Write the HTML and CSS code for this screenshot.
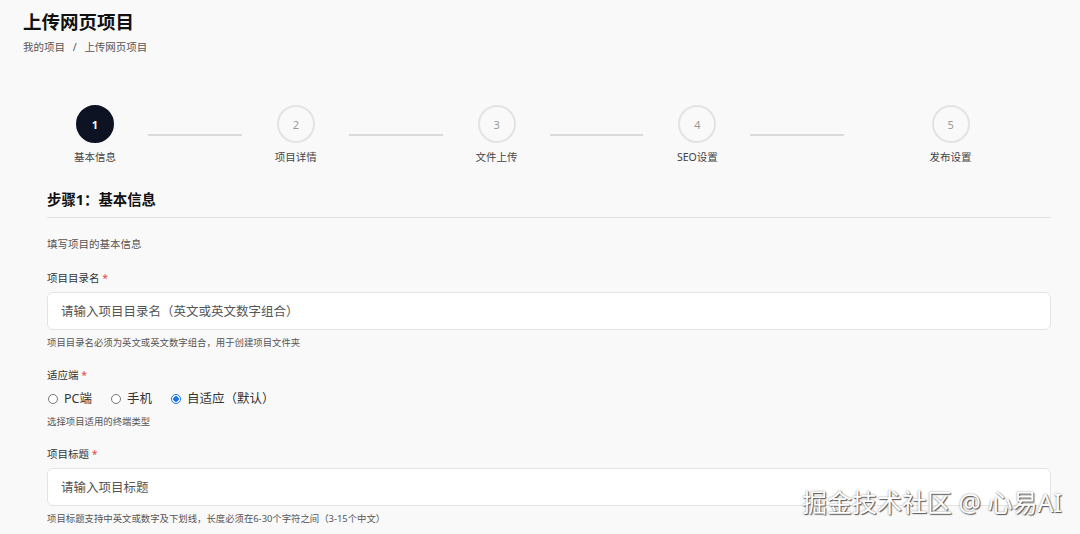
FILE: index.html
```html
<!DOCTYPE html>
<html lang="zh-CN">
<head>
    <meta charset="UTF-8">
    <meta name="viewport" content="width=device-width, initial-scale=1.0">
    <title>上传网页项目</title>
    <link rel="stylesheet" href="styles.css">
</head>
<body>
    <div class="page">
        <div class="page-header">
            <h1 class="page-title">上传网页项目</h1>
            <div class="breadcrumb">
                <span>我的项目</span>
                <span class="sep">/</span>
                <span>上传网页项目</span>
            </div>
        </div>

        <div class="card">
            <div class="steps">
                <div class="step">
                    <div class="step-body">
                        <div class="step-circle active">1</div>
                        <div class="step-label">基本信息</div>
                    </div>
                    <div class="step-line"></div>
                </div>
                <div class="step">
                    <div class="step-body">
                        <div class="step-circle">2</div>
                        <div class="step-label">项目详情</div>
                    </div>
                    <div class="step-line"></div>
                </div>
                <div class="step">
                    <div class="step-body">
                        <div class="step-circle">3</div>
                        <div class="step-label">文件上传</div>
                    </div>
                    <div class="step-line"></div>
                </div>
                <div class="step">
                    <div class="step-body">
                        <div class="step-circle">4</div>
                        <div class="step-label">SEO设置</div>
                    </div>
                    <div class="step-line"></div>
                </div>
                <div class="step last">
                    <div class="step-body">
                        <div class="step-circle">5</div>
                        <div class="step-label">发布设置</div>
                    </div>
                </div>
            </div>

            <h2 class="section-title">步骤1：基本信息</h2>
            <p class="section-desc">填写项目的基本信息</p>

            <form class="form">
                <div class="form-group">
                    <label class="form-label" for="dirName">项目目录名 <span class="required">*</span></label>
                    <input class="form-input" type="text" id="dirName" placeholder="请输入项目目录名（英文或英文数字组合）">
                    <div class="form-help">项目目录名必须为英文或英文数字组合，用于创建项目文件夹</div>
                </div>

                <div class="form-group">
                    <div class="form-label">适应端 <span class="required">*</span></div>
                    <div class="radio-row">
                        <label class="radio"><input type="radio" name="device"> PC端</label>
                        <label class="radio"><input type="radio" name="device"> 手机</label>
                        <label class="radio"><input type="radio" name="device" checked> 自适应（默认）</label>
                    </div>
                    <div class="form-help">选择项目适用的终端类型</div>
                </div>

                <div class="form-group">
                    <label class="form-label" for="title">项目标题 <span class="required">*</span></label>
                    <input class="form-input" type="text" id="title" placeholder="请输入项目标题">
                    <div class="form-help">项目标题支持中英文或数字及下划线，长度必须在6-30个字符之间（3-15个中文）</div>
                </div>
            </form>
        </div>
    </div>

    <div class="watermark">掘金技术社区 @ 心易AI</div>
</body>
</html>
```

FILE: styles.css
```css
body {
    margin: 0;
    background-color: #f9f9f9;
    font-family: "Noto Sans", "Noto Sans CJK SC", sans-serif;
    color: #333;
    overflow: hidden;
}

.page {
    padding: 10px 29px 0 23px;
}

.page-title {
    margin: 0;
    font-size: 18.5px;
    line-height: 24px;
    font-weight: 700;
    color: #111;
}

.breadcrumb {
    margin-top: 5px;
    font-size: 10.5px;
    line-height: 16px;
    color: #555;
}

.breadcrumb .sep {
    margin: 0 5px;
}

.card {
    margin-left: 24px;
}

/* steps */
.steps {
    display: flex;
    margin-top: 50px;
}

.step {
    flex: 1;
    display: flex;
    align-items: center;
}

.step.last {
    justify-content: center;
}

.step-body {
    width: 96px;
    display: flex;
    flex-direction: column;
    align-items: center;
}

.step-circle {
    width: 38px;
    height: 38px;
    box-sizing: border-box;
    border: 2px solid #e3e3e3;
    border-radius: 50%;
    display: flex;
    align-items: center;
    justify-content: center;
    font-size: 11px;
    color: #999;
}

.step-circle.active {
    background-color: #0d1322;
    border-color: #0d1322;
    color: #fff;
    font-weight: 700;
}

.step-label {
    margin-top: 6px;
    font-size: 10.5px;
    line-height: 16px;
    color: #444;
}

.step-line {
    flex: 1;
    height: 2px;
    margin: 0 6px 0 5px;
    background-color: #dadada;
}

/* section */
.section-title {
    margin: 25px 0 0;
    padding-bottom: 7px;
    border-bottom: 1px solid #e2e2e2;
    font-size: 14.4px;
    line-height: 20px;
    font-weight: 700;
    color: #111;
}

.section-desc {
    margin: 18px 0 0;
    font-size: 10.5px;
    line-height: 16px;
    color: #555;
}

.form {
    margin-top: 18px;
}

.form-group {
    margin-bottom: 17px;
}

.form-label {
    display: block;
    font-size: 10.5px;
    line-height: 16px;
    color: #333;
}

.required {
    color: #e5484d;
}

.form-input {
    display: block;
    width: 100%;
    height: 38px;
    box-sizing: border-box;
    margin-top: 6px;
    padding: 0 13px;
    border: 1px solid #e4e4e4;
    border-radius: 6px;
    background-color: #fff;
    font-family: inherit;
    font-size: 12.5px;
    color: #333;
    outline: none;
}

.form-input::placeholder {
    color: #555;
}

.form-help {
    margin-top: 6px;
    font-size: 9.4px;
    line-height: 14px;
    color: #555;
}

.radio-row {
    display: flex;
    gap: 18px;
    margin-top: 7px;
    font-size: 12.5px;
    line-height: 18px;
    color: #333;
}

.radio-row + .form-help {
    margin-top: 7px;
}

.radio {
    display: flex;
    align-items: center;
    gap: 6px;
}

.radio input {
    appearance: none;
    width: 10px;
    height: 10px;
    margin: 0 0 0 1px;
    border: 1px solid #777;
    border-radius: 50%;
    background-color: #fff;
}

.radio input:checked {
    border-color: #1a73e8;
    background: radial-gradient(circle, #1a73e8 0 2.5px, #fff 3px);
}

.watermark {
    position: absolute;
    right: 18px;
    bottom: 17px;
    font-size: 25px;
    line-height: 30px;
    color: #fff;
    text-shadow: 1px 1px 1px #555, 0 0 2px #888;
}
```
